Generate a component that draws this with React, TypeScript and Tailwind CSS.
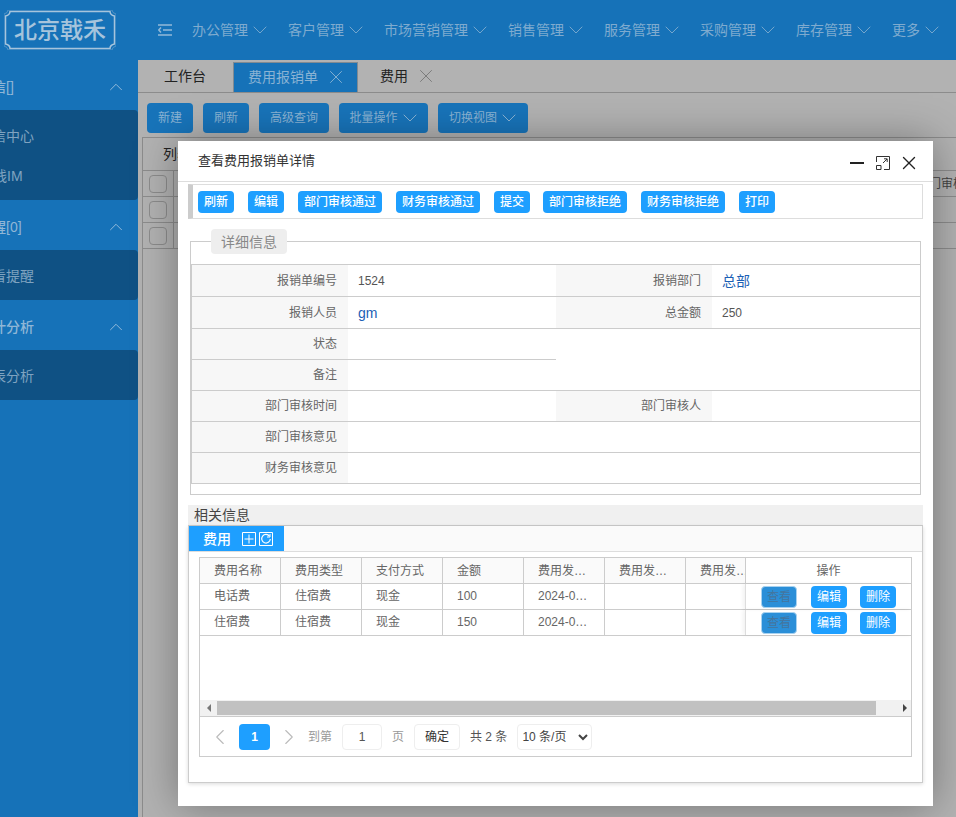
import React from "react";
import { ChevronDown, ChevronUp, ChevronLeft, ChevronRight, X } from "lucide-react";

const nav = [
  { t: "办公管理", w: "w-[96px]" },
  { t: "客户管理", w: "w-[96px]" },
  { t: "市场营销管理", w: "w-[124px]" },
  { t: "销售管理", w: "w-[96px]" },
  { t: "服务管理", w: "w-[96px]" },
  { t: "采购管理", w: "w-[96px]" },
  { t: "库存管理", w: "w-[96px]" },
  { t: "更多", w: "w-[64px]" },
];

function Side({ title, ml, items }: { title: string; ml: string; items: { t: string; ml: string }[] }) {
  return (
    <div>
      <div className="h-[50px] flex items-center justify-between pr-[10px] pt-[3px] text-sm font-medium text-[#8fb6d6] whitespace-nowrap">
        <span className={ml}>{title}</span>
        <ChevronUp size={22} strokeWidth={1} className="text-[#9cc0dc] mr-px" />
      </div>
      <div className="bg-[#0f5184] rounded-r-sm pt-[6px] pb-[4px]">
        {items.map((i) => (
          <div key={i.t} className="h-10 flex items-center text-sm text-[#7fa3c0] whitespace-nowrap">
            <span className={i.ml}>{i.t}</span>
          </div>
        ))}
      </div>
    </div>
  );
}

function PageBtn({ children, w, chevron }: { children: React.ReactNode; w: string; chevron?: boolean }) {
  return (
    <div className={`${w} h-[30px] bg-[#1874ba] rounded-sm flex items-center justify-center text-xs text-[#8ab3d4] whitespace-nowrap`}>
      {children}
      {chevron && <ChevronDown size={24} strokeWidth={1} className="-mr-1" />}
    </div>
  );
}

function ActBtn({ children, w, className = "" }: { children: React.ReactNode; w: string; className?: string }) {
  return (
    <div className={`${w} ${className} h-[22px] bg-[#1e9fff] rounded-sm flex items-center justify-center text-xs font-medium text-white whitespace-nowrap`}>
      {children}
    </div>
  );
}

function Label({ children }: { children?: React.ReactNode }) {
  return <div className="w-[156px] shrink-0 bg-[#f7f7f7] pr-[11px] flex items-center justify-end text-xs text-[#666]">{children}</div>;
}
function Val({ children, w = "w-[208px]", link }: { children?: React.ReactNode; w?: string; link?: boolean }) {
  return (
    <div className={`${w} shrink-0 pl-[10px] flex items-center ${link ? "text-sm text-[#1b5fb5]" : "text-xs text-[#555]"}`}>{children}</div>
  );
}

const headCells = ["费用名称", "费用类型", "支付方式", "金额", "费用发…", "费用发…", "费用发…"];
const rowsData = [
  ["电话费", "住宿费", "现金", "100", "2024-0…", "", ""],
  ["住宿费", "住宿费", "现金", "150", "2024-0…", "", ""],
];
const colW = ["w-[81px]", "w-[81px]", "w-[81px]", "w-[81px]", "w-[81px]", "w-[81px]", "w-[59px]"];

function OpBtn({ children, dim, className = "" }: { children: React.ReactNode; dim?: boolean; className?: string }) {
  return (
    <div
      className={`w-9 h-[22px] rounded-sm flex items-center justify-center text-xs ${className} ${
        dim ? "bg-[#2b8fd8] text-[#44759e] border border-[#a8d2f0]" : "bg-[#1e9fff] text-white"
      }`}
    >
      {children}
    </div>
  );
}

export default function App() {
  return (
    <div className="relative w-[956px] h-[817px] overflow-hidden bg-[#b2b2b2] font-['Liberation_Sans','Noto_Sans_CJK_SC',sans-serif]">
      {/* Header */}
      <div className="h-[60px] bg-[#1672b8] flex items-center">
        <div className="w-[138px] h-full shrink-0 flex items-center pl-1">
          <div className="relative w-[112px] h-10 flex items-center justify-center text-[23px] font-medium text-[#a6c4dc]">
            <svg className="absolute inset-0" width="112" height="40" viewBox="0 0 112 40" fill="none">
              <path d="M6 1.5H106Q106 5 110.5 6V34Q106 35 106 38.5H6Q6 35 1.5 34V6Q6 5 6 1.5Z" stroke="#a6c4dc" strokeWidth="1.5" />
              <path d="M4 0H108Q108 3 112 4V36Q108 37 108 40H4Q4 37 0 36V4Q4 3 4 0Z" stroke="#5f9ac8" strokeWidth="0.8" />
            </svg>
            <span className="relative">北京戟禾</span>
          </div>
        </div>
        <svg className="ml-5 mr-[20px] shrink-0" width="14" height="12" viewBox="0 0 14 12" fill="none" stroke="#93b9d8" strokeWidth="1.4">
          <path d="M0 1H14M5 6H14M0 11H14" />
          <path d="M3 3.5L0.8 6L3 8.5" />
        </svg>
        <div className="flex items-center">
          {nav.map((n) => (
            <div key={n.t} className={`${n.w} shrink-0 flex items-center text-sm text-[#7fabcf] whitespace-nowrap`}>
              {n.t}
              <ChevronDown size={24} strokeWidth={0.9} />
            </div>
          ))}
        </div>
      </div>

      <div className="flex h-[757px]">
        {/* Sidebar */}
        <div className="w-[138px] shrink-0 bg-[#1672b8] overflow-hidden">
          <Side title="站内通信[]" ml="-ml-[50px]" items={[{ t: "通信中心", ml: "-ml-[22px]" }, { t: "在线IM", ml: "-ml-[21px]" }]} />
          <Side title="待办提醒[0]" ml="-ml-[50px]" items={[{ t: "查看提醒", ml: "-ml-[22px]" }]} />
          <Side title="统计分析" ml="-ml-[22px]" items={[{ t: "报表分析", ml: "-ml-[22px]" }]} />
        </div>

        {/* Main */}
        <div className="w-[818px] flex flex-col">
          <div className="h-[33px] border-b border-[#8c8c8c] flex items-end pl-[26px] text-sm text-[#222] shrink-0">
            <div className="w-[69px] h-[30px] flex items-center pb-[2px]">工作台</div>
            <div className="w-[125px] h-[30px] bg-[#1672b8] border-t border-x border-[#808a92] flex items-center pl-[14px] pb-[2px] text-[#8ab3d4]">
              费用报销单
              <X size={22} strokeWidth={1} className="ml-[7px] text-[#8ab3d4]" />
            </div>
            <div className="h-[30px] flex items-center pl-[22px] pb-[2px]">
              费用
              <X size={22} strokeWidth={1} className="ml-[7px] text-[#777]" />
            </div>
          </div>
          <div className="flex gap-[10px] mt-[9px] pt-px pl-[9px] text-[#8ab3d4] shrink-0">
            <PageBtn w="w-[46px]">新建</PageBtn>
            <PageBtn w="w-[46px]">刷新</PageBtn>
            <PageBtn w="w-[70px]">高级查询</PageBtn>
            <PageBtn w="w-[89px]" chevron>批量操作</PageBtn>
            <PageBtn w="w-[90px]" chevron>切换视图</PageBtn>
          </div>
          <div className="mt-[4px] ml-1 border-l border-t border-[#8c8c8c] flex-1">
            <div className="h-[33px] border-b border-[#8c8c8c] flex items-center pl-5 text-sm text-[#222]">
              <span>列表</span>
            </div>
            {[0, 1, 2].map((i) => (
              <div key={i} className="h-[26px] border-b border-[#8c8c8c] flex items-center pl-[6px]">
                <div className="w-[18px] h-[18px] border border-[#8c8c8c] rounded-sm" />
                <div className="ml-[6px] h-full border-l border-[#8c8c8c]" />
                {i === 0 && <span className="ml-auto w-[27px] overflow-hidden whitespace-nowrap text-xs text-[#444]">门审核时间</span>}
              </div>
            ))}
          </div>
        </div>
      </div>

      {/* Modal */}
      <div className="absolute left-[178px] top-[141px] w-[755px] h-[665px] bg-white shadow-[0_0_40px_rgba(0,0,0,0.35)] flex flex-col">
        <div className="h-[41px] border-b border-[#ddd] flex items-center justify-between pl-5 pr-[13px] shrink-0">
          <span className="text-[13px] text-[#333]">查看费用报销单详情</span>
          <div className="flex items-center gap-3 text-[#222] mt-1">
            <div className="w-[14px] h-[2px] bg-[#222]" />
            <svg width="14" height="14" viewBox="0 0 14 14" fill="none" stroke="#333" strokeWidth="1">
              <path d="M0.5 6V0.5H13.5V13.5H8" />
              <path d="M0.5 9.5H5V13.5H0.5Z" />
              <path d="M7 7L11 3M8 2.8H11.2V6" />
            </svg>
            <X size={22} strokeWidth={1.5} className="-ml-[4px]" />
          </div>
        </div>

        <div className="mt-[2px] ml-[10px] w-[735px] h-[35px] border border-[#ddd] border-l-[5px] border-l-[#ccc] flex items-center gap-[14px] pl-[5px] shrink-0">
          <ActBtn w="w-9">刷新</ActBtn>
          <ActBtn w="w-9">编辑</ActBtn>
          <ActBtn w="w-[84px]">部门审核通过</ActBtn>
          <ActBtn w="w-[84px]">财务审核通过</ActBtn>
          <ActBtn w="w-9">提交</ActBtn>
          <ActBtn w="w-[84px]" className="-ml-px">部门审核拒绝</ActBtn>
          <ActBtn w="w-[84px]">财务审核拒绝</ActBtn>
          <ActBtn w="w-9">打印</ActBtn>
        </div>

        {/* Fieldset */}
        <fieldset className="mt-[10px] ml-3 w-[731px] h-[266px] border border-[#ccc] shrink-0 px-0 pb-0 block">
          <legend className="ml-5 w-[76px] h-[25px] bg-[#eee] rounded-sm text-sm text-[#888] flex items-center justify-center">详细信息</legend>
          <div className="mt-[10px] border-t border-l border-[#ccc] text-xs">
            <div className="flex h-8 border-b border-[#ccc]">
              <Label>报销单编号</Label>
              <Val>1524</Val>
              <Label>报销部门</Label>
              <Val link>总部</Val>
            </div>
            <div className="flex h-8 border-b border-[#ccc]">
              <Label>报销人员</Label>
              <Val link>gm</Val>
              <Label>总金额</Label>
              <Val>250</Val>
            </div>
            <div className="flex h-[62px] border-b border-[#ccc]">
              <div className="w-[364px] shrink-0 flex flex-col">
                <div className="flex h-[31px] border-b border-[#ccc]">
                  <Label>状态</Label>
                </div>
                <div className="flex flex-1">
                  <Label>备注</Label>
                </div>
              </div>
            </div>
            <div className="flex h-[31px] border-b border-[#ccc]">
              <Label>部门审核时间</Label>
              <Val />
              <Label>部门审核人</Label>
              <Val />
            </div>
            <div className="flex h-[31px] border-b border-[#ccc]">
              <Label>部门审核意见</Label>
            </div>
            <div className="flex h-[31px] border-b border-[#ccc]">
              <Label>财务审核意见</Label>
            </div>
          </div>
        </fieldset>

        {/* Related */}
        <div className="mt-[10px] ml-[10px] w-[735px] h-[21px] bg-[#f0f0f0] border-b border-[#ccc] flex items-center pl-[6px] text-sm text-[#444] shrink-0">相关信息</div>
        <div className="ml-[10px] w-[735px] h-[257px] border border-t-0 border-[#ccc] shadow-[0_1px_4px_rgba(0,0,0,0.15)] shrink-0 flex flex-col">
          <div className="h-[26px] bg-[#fafafa] border-b border-[#ddd] flex shrink-0">
            <div className="w-[95px] bg-[#1e9fff] flex items-center pl-[14px] text-sm font-medium text-white">
              费用
              <svg className="ml-[11px]" width="14" height="14" viewBox="0 0 14 14" fill="none" stroke="white" strokeWidth="1">
                <path d="M0.5 0.5H13.5V13.5H0.5Z" />
                <path d="M7 2.5V11.5M2.5 7H11.5" />
              </svg>
              <svg className="ml-[3px]" width="14" height="14" viewBox="0 0 14 14" fill="none" stroke="white" strokeWidth="1">
                <path d="M0.5 0.5H13.5V13.5H0.5Z" />
                <path d="M10.5 4.2A4.3 4.3 0 1 0 11.3 7" strokeWidth="1.2" />
                <path d="M11 2V5H8" />
              </svg>
            </div>
          </div>
          <div className="mt-[5px] ml-[10px] w-[713px] h-[200px] border border-[#ccc] flex flex-col text-xs text-[#666] shrink-0">
            <div className="h-[26px] bg-[#fafafa] border-b border-[#ccc] flex shrink-0">
              {headCells.map((c, i) => (
                <div key={i} className={`${colW[i]} shrink-0 ${i < 6 ? "border-r border-[#ccc]" : ""} pl-[14px] flex items-center whitespace-nowrap overflow-hidden`}>{c}</div>
              ))}
              <div className="flex-1 flex items-center justify-center border-l border-[#ccc] bg-white">操作</div>
            </div>
            {rowsData.map((r, ri) => (
              <div key={ri} className="h-[26px] border-b border-[#ccc] flex shrink-0">
                {r.map((c, i) => (
                  <div key={i} className={`${colW[i]} shrink-0 ${i < 6 ? "border-r border-[#ccc]" : ""} pl-[14px] pb-[2px] flex items-center whitespace-nowrap overflow-hidden`}>{c}</div>
                ))}
                <div className="flex-1 flex items-center justify-center gap-[14px] border-l border-[#ddd] shadow-[-2px_0_4px_rgba(0,0,0,0.06)]">
                  <OpBtn dim>查看</OpBtn>
                  <OpBtn>编辑</OpBtn>
                  <OpBtn className="-ml-px">删除</OpBtn>
                </div>
              </div>
            ))}
            <div className="flex-1" />
            <div className="h-[16px] bg-[#f1f1f1] flex items-center shrink-0">
              <div className="w-[17px] flex justify-center">
                <div className="w-0 h-0 border-y-[4px] border-y-transparent border-r-[4px] border-r-[#777]" />
              </div>
              <div className="w-[659px] h-[14px] bg-[#c1c1c1]" />
              <div className="flex-1 flex justify-end pr-[4px]">
                <div className="w-0 h-0 border-y-[4px] border-y-transparent border-l-[4px] border-l-[#444]" />
              </div>
            </div>
            <div className="h-10 border-t border-[#ccc] flex items-center pl-[7px] text-xs text-[#999] shrink-0">
              <ChevronLeft size={26} strokeWidth={1} className="text-[#bbb]" />
              <div className="ml-[6px] w-[31px] h-[26px] bg-[#1e9fff] rounded-sm text-white font-bold flex items-center justify-center">1</div>
              <ChevronRight size={26} strokeWidth={1} className="ml-[6px] text-[#bbb]" />
              <span className="ml-[6px]">到第</span>
              <div className="ml-[10px] w-10 h-[26px] border border-[#eee] rounded-sm text-[#555] flex items-center justify-center">1</div>
              <span className="ml-[10px]">页</span>
              <div className="ml-[10px] w-[46px] h-[26px] border border-[#eee] rounded-sm text-[#333] flex items-center justify-center">确定</div>
              <span className="ml-[10px] text-[#555]">共 2 条</span>
              <select className="ml-[10px] w-[75px] h-[26px] border border-[#eee] rounded-sm bg-white text-xs text-[#444]" defaultValue="10">
                <option value="10">10 条/页</option>
              </select>
            </div>
          </div>
        </div>
      </div>
    </div>
  );
}
